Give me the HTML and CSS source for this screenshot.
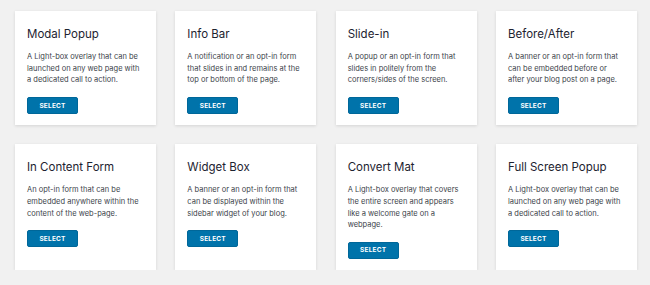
FILE: index.html
```html
<!DOCTYPE html>
<html>
<head>
<meta charset="utf-8">
<link rel="stylesheet" href="styles.css">
</head>
<body>
<div class="grid">
  <div class="card">
    <h3 class="title">Modal Popup</h3>
    <p class="desc">A Light-box overlay that can be launched on any web page with a dedicated call to action.</p>
    <button class="btn">SELECT</button>
  </div>
  <div class="card">
    <h3 class="title">Info Bar</h3>
    <p class="desc">A notification or an opt-in form that slides in and remains at the top or bottom of the page.</p>
    <button class="btn">SELECT</button>
  </div>
  <div class="card">
    <h3 class="title">Slide-in</h3>
    <p class="desc">A popup or an opt-in form that slides in politely from the corners/sides of the screen.</p>
    <button class="btn">SELECT</button>
  </div>
  <div class="card">
    <h3 class="title">Before/After</h3>
    <p class="desc">A banner or an opt-in form that can be embedded before or after your blog post on a page.</p>
    <button class="btn">SELECT</button>
  </div>
  <div class="card">
    <h3 class="title">In Content Form</h3>
    <p class="desc">An opt-in form that can be embedded anywhere within the content of the web-page.</p>
    <button class="btn">SELECT</button>
  </div>
  <div class="card">
    <h3 class="title">Widget Box</h3>
    <p class="desc">A banner or an opt-in form that can be displayed within the sidebar widget of your blog.</p>
    <button class="btn">SELECT</button>
  </div>
  <div class="card">
    <h3 class="title">Convert Mat</h3>
    <p class="desc">A Light-box overlay that covers the entire screen and appears like a welcome gate on a webpage.</p>
    <button class="btn">SELECT</button>
  </div>
  <div class="card">
    <h3 class="title">Full Screen Popup</h3>
    <p class="desc">A Light-box overlay that can be launched on any web page with a dedicated call to action.</p>
    <button class="btn">SELECT</button>
  </div>
</div>
</body>
</html>
```
FILE: styles.css
```css
html, body {
  margin: 0;
  background: #f1f1f1;
}
body {
  padding: 11px 13px 0 15px;
  font-family: Inter, "Noto Sans", sans-serif;
}
.grid {
  display: grid;
  grid-template-columns: repeat(4, 141px);
  column-gap: 19.33px;
  row-gap: 19px;
}
.card {
  background: #fff;
  box-shadow: 0 1px 3px rgba(0, 0, 0, 0.12);
  padding: 15px 12px 11px 12px;
  display: flex;
  flex-direction: column;
  align-items: flex-start;
}
.title {
  margin: 0;
  font-size: 11.5px;
  line-height: 17px;
  font-weight: 400;
  color: #1d2330;
}
.desc {
  margin: 8px 0 0 0;
  font-size: 7.5px;
  line-height: 11.7px;
  color: #3c434a;
}
.btn {
  margin-top: 11px;
  width: 51px;
  height: 17px;
  padding: 0;
  border: 1px solid #006799;
  border-radius: 2px;
  background: #0073aa;
  color: #fff;
  font-family: Inter, "Noto Sans", sans-serif;
  font-size: 6.5px;
  font-weight: 700;
  letter-spacing: 0.2px;
}
```
